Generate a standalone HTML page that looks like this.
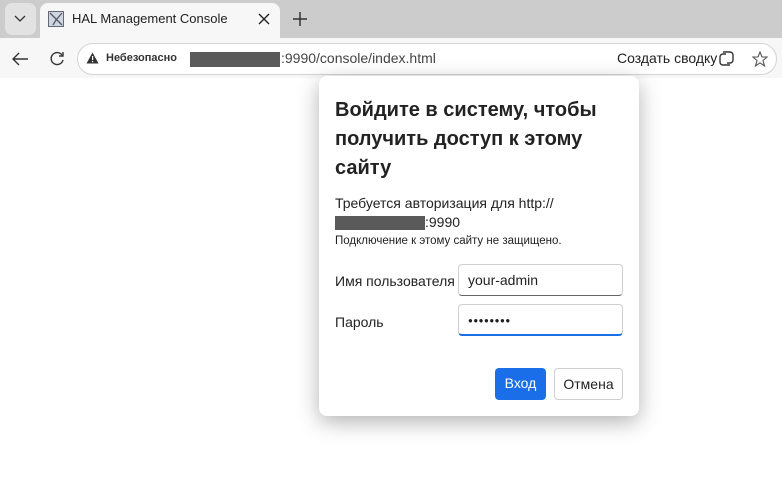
<!DOCTYPE html>
<html><head><meta charset="utf-8"><style>
*{margin:0;padding:0;box-sizing:border-box}
body{width:782px;height:501px;overflow:hidden;background:#fff;font-family:"Liberation Sans","Noto Sans CJK SC",sans-serif;position:relative;color:#1f1f1f}
.abs{position:absolute}
#tabbar{left:0;top:0;width:782px;height:38px;background:#cccccc}
#tab{left:40px;top:3px;width:240px;height:36px;background:#f7f7f7;border-radius:8px 8px 0 0}
#toolbar{left:0;top:38px;width:782px;height:40px;background:#f7f7f7}
#addr{left:77px;top:43px;width:700px;height:32px;border:1px solid #d4d4d4;border-radius:16px;background:#fff}
#dlg{left:319px;top:76px;width:320px;height:340px;background:#fff;border-radius:8px;box-shadow:0 6px 22px rgba(0,0,0,.3)}
.inp{position:absolute;left:139px;width:165px;height:32px;border:1px solid #d0d0d0;border-radius:4px;font-size:14px;padding:7px 9px}
.btn{position:absolute;top:292px;height:32px;border-radius:4px;font-size:14px;text-align:center;line-height:30px}
</style></head><body>
<div id="tabbar" class="abs"></div>
<div class="abs" style="left:5px;top:3px;width:31px;height:32px;background:#e2e2e2;border-radius:7px"></div>
<svg class="abs" style="left:13px;top:13px" width="14" height="10"><path d="M2 3 L7 8 L12 3" fill="none" stroke="#333" stroke-width="1.3"/></svg>
<div id="tab" class="abs"></div>
<svg class="abs" style="left:48px;top:11px" width="16" height="16"><rect x="0.5" y="0.5" width="15" height="15" fill="#cfd8e0" stroke="#667"/><path d="M2 2L14 14M14 2L8 9M5 14L8 9" stroke="#556" stroke-width="1.3" fill="none"/></svg>
<div class="abs" style="left:72px;top:11px;font-size:13px;color:#1f1f1f">HAL Management Console</div>
<svg class="abs" style="left:258px;top:13px" width="12" height="12"><path d="M1 1L11 11M11 1L1 11" stroke="#222" stroke-width="1.4"/></svg>
<svg class="abs" style="left:292px;top:11px" width="16" height="16"><path d="M8 1V15M1 8H15" stroke="#333" stroke-width="1.5"/></svg>
<div id="toolbar" class="abs"></div>
<svg class="abs" style="left:11px;top:51px" width="18" height="16"><path d="M17 8H2M8 2L2 8L8 14" fill="none" stroke="#333" stroke-width="1.4"/></svg>
<svg class="abs" style="left:48px;top:50px" width="18" height="18"><path d="M14 5A6 6 0 1 0 15 10" fill="none" stroke="#333" stroke-width="1.4"/><path d="M15 2V6H11" fill="none" stroke="#333" stroke-width="1.4"/></svg>
<div id="addr" class="abs"></div>
<svg class="abs" style="left:86px;top:52px" width="13" height="12"><path d="M6.5 0.5L12.5 11.5H0.5Z" fill="#333"/><rect x="6" y="4" width="1.2" height="4" fill="#fff"/><rect x="6" y="9" width="1.2" height="1.2" fill="#fff"/></svg>
<div class="abs" style="left:106px;top:52px;font-size:11px;font-weight:bold;color:#333">Небезопасно</div>
<div class="abs" style="left:190px;top:52px;width:90px;height:15px;background:#5a5a5a"></div>
<div class="abs" style="left:281px;top:50px;font-size:14px;color:#444">:9990/console/index.html</div>
<div class="abs" style="left:617px;top:50px;font-size:14px;color:#222">Создать сводку</div>
<svg class="abs" style="left:718px;top:50px" width="18" height="17"><path d="M5 2H12A3 3 0 0 1 15 5V10A3 3 0 0 1 12 13H9M12 15H5A3 3 0 0 1 2 12V7A3 3 0 0 1 5 4H8" fill="none" stroke="#333" stroke-width="1.4"/></svg>
<svg class="abs" style="left:752px;top:51px" width="16" height="16"><path d="M8 1L10 6H15L11 9.5L12.5 15L8 11.8L3.5 15L5 9.5L1 6H6Z" fill="none" stroke="#555" stroke-width="1.1"/></svg>
<div id="dlg" class="abs">
<div class="abs" style="left:16px;top:20px;width:290px;font-size:20px;font-weight:bold;line-height:29px;color:#222">Войдите в систему, чтобы получить доступ к этому сайту</div>
<div class="abs" style="left:16px;top:119px;font-size:14px;color:#222">Требуется авторизация для http://</div>
<div class="abs" style="left:16px;top:140px;width:90px;height:14px;background:#5a5a5a"></div>
<div class="abs" style="left:106px;top:138px;font-size:14px;color:#222">:9990</div>
<div class="abs" style="left:16px;top:159px;font-size:11.5px;color:#222">Подключение к этому сайту не защищено.</div>
<div class="abs" style="left:16px;top:197px;font-size:14px;color:#222">Имя пользователя</div>
<div class="abs" style="left:16px;top:238px;font-size:14px;color:#222">Пароль</div>
<div class="inp" style="top:188px;border-bottom:1px solid #666">your-admin</div>
<div class="inp" style="top:228px;border-bottom:2px solid #1a6ee8;font-size:8px;letter-spacing:0.5px;padding-top:11px">●●●●●●●●</div>
<div class="btn" style="left:176px;width:51px;background:#1a6ee8;color:#fff">Вход</div>
<div class="btn" style="left:235px;width:69px;border:1px solid #cfcfcf;color:#222">Отмена</div>
</div>
</body></html>
